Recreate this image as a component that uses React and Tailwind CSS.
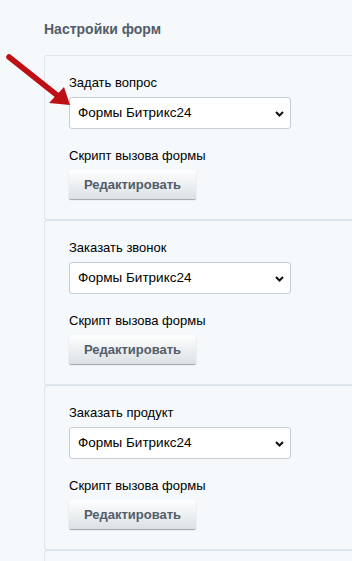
import React from "react";

const Panel = ({ label }) => (
  <div className="h-[165px] border border-r-0 border-[#dde6ec] rounded-l-[3px] bg-[#f5f9fb] pl-[24px] pt-[18px]">
    <div className="text-[13px] leading-[17px] text-[#000]">{label}</div>
    <div className="relative mt-[6px] w-[222px] h-[32px] bg-white border border-[#c6cdd3] rounded-[3px] flex items-center pl-[8px]">
      <span className="text-[13.5px] text-[#000]">Формы Битрикс24</span>
      <svg className="absolute right-[6px] top-[13px]" width="9" height="6" viewBox="0 0 9 6">
        <path d="M1 1 L4.5 4.5 L8 1" fill="none" stroke="#111" strokeWidth="2" />
      </svg>
    </div>
    <div className="mt-[18px] text-[13px] leading-[17px] text-[#000]">Скрипт вызова формы</div>
    <button className="mt-[6px] w-[127px] h-[29px] rounded-[2px] bg-gradient-to-b from-[#fff] to-[#dbe1e4] shadow-[0_1px_1px_rgba(0,0,0,0.35)] text-[13px] font-bold text-[#535c69]">
      Редактировать
    </button>
  </div>
);

export default function App() {
  return (
    <div className="relative w-[352px] h-[561px] overflow-hidden bg-[#f5f9fb]" style={{ fontFamily: '"Liberation Sans", Arial, sans-serif' }}>
      <div className="pl-[44px] pt-[21px]">
        <div className="text-[14px] leading-[16px] font-bold text-[#535c69]">Настройки форм</div>
        <div className="mt-[18px]">
          <Panel label="Задать вопрос" />
          <Panel label="Заказать звонок" />
          <Panel label="Заказать продукт" />
          <div className="h-[40px] border border-r-0 border-[#dde6ec] rounded-l-[3px] bg-[#f5f9fb]" />
        </div>
      </div>
      <svg className="absolute left-0 top-0" width="80" height="110" viewBox="0 0 80 110">
        <line x1="9" y1="57" x2="58" y2="96" stroke="#bd0f14" strokeWidth="5.5" strokeLinecap="round" />
        <polygon points="70,105 49,103 64,87" fill="#bd0f14" />
      </svg>
    </div>
  );
}
